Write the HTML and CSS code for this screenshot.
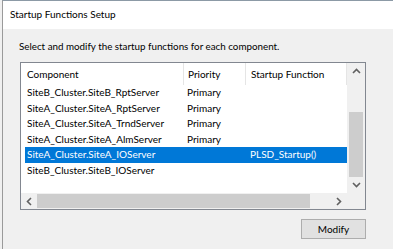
FILE: index.html
```html
<!DOCTYPE html>
<html lang="en">
<head>
    <meta charset="UTF-8">
    <title>Startup Functions Setup</title>
    <link rel="stylesheet" href="styles.css">
</head>
<body>
    <div class="window">
        <div class="titlebar">Startup Functions Setup</div>
        <div class="content">
            <p class="hint">Select and modify the startup functions for each component.</p>
            <div class="listbox">
                <div class="list-main">
                    <div class="list-head">
                        <div class="col col-comp">Component</div>
                        <div class="col col-prio">Priority</div>
                        <div class="col col-func">Startup Function</div>
                    </div>
                    <div class="row">
                        <div class="col col-comp">SiteB_Cluster.SiteB_RptServer</div>
                        <div class="col col-prio">Primary</div>
                        <div class="col col-func"></div>
                    </div>
                    <div class="row">
                        <div class="col col-comp">SiteA_Cluster.SiteA_RptServer</div>
                        <div class="col col-prio">Primary</div>
                        <div class="col col-func"></div>
                    </div>
                    <div class="row">
                        <div class="col col-comp">SiteA_Cluster.SiteA_TrndServer</div>
                        <div class="col col-prio">Primary</div>
                        <div class="col col-func"></div>
                    </div>
                    <div class="row">
                        <div class="col col-comp">SiteA_Cluster.SiteA_AlmServer</div>
                        <div class="col col-prio">Primary</div>
                        <div class="col col-func"></div>
                    </div>
                    <div class="row selected">
                        <div class="col col-comp">SiteA_Cluster.SiteA_IOServer</div>
                        <div class="col col-prio"></div>
                        <div class="col col-func">PLSD_Startup()</div>
                    </div>
                    <div class="row">
                        <div class="col col-comp">SiteB_Cluster.SiteB_IOServer</div>
                        <div class="col col-prio"></div>
                        <div class="col col-func"></div>
                    </div>
                </div>
                <!-- vertical scrollbar -->
                <div class="vscroll">
                    <div class="arrow">
                        <svg width="9" height="6" viewBox="0 0 9 6"><path d="M1 5 L4.5 1.5 L8 5" fill="none" stroke="#606060" stroke-width="1.6"/></svg>
                    </div>
                    <div class="vtrack"><div class="vthumb"></div></div>
                    <div class="arrow">
                        <svg width="9" height="6" viewBox="0 0 9 6"><path d="M1 1 L4.5 4.5 L8 1" fill="none" stroke="#606060" stroke-width="1.6"/></svg>
                    </div>
                </div>
                <!-- horizontal scrollbar -->
                <div class="hscroll">
                    <div class="harrow">
                        <svg width="6" height="9" viewBox="0 0 6 9"><path d="M5 1 L1.5 4.5 L5 8" fill="none" stroke="#606060" stroke-width="1.6"/></svg>
                    </div>
                    <div class="htrack"><div class="hthumb"></div></div>
                    <div class="harrow">
                        <svg width="6" height="9" viewBox="0 0 6 9"><path d="M1 1 L4.5 4.5 L1 8" fill="none" stroke="#606060" stroke-width="1.6"/></svg>
                    </div>
                </div>
                <div class="corner"></div>
            </div>
            <div class="buttons">
                <button type="button" class="btn">Modify</button>
            </div>
        </div>
    </div>
</body>
</html>
```

FILE: styles.css
```css
body {
    margin: 0;
    background: #f0f0f0;
    font-family: Lato, "Noto Sans", sans-serif;
    font-size: 10px;
    color: #000;
}

.window {
    margin-left: 2px;
    height: 248px;
    border-left: 1px solid #9a9a9a;
    border-top: 1px solid #8c9aa6;
    background: #f0f0f0;
}

.titlebar {
    height: 28px;
    background: #fff;
    padding-left: 7px;
    font-size: 10px;
    line-height: 27px;
}

.content {
    padding: 0 0 0 17px;
}

.hint {
    margin: 0 0 0 -1px;
    padding: 9px 0 8px 0;
    height: 16px;
    line-height: 16px;
    font-size: 9.8px;
}

.listbox {
    width: 344px;
    height: 146px;
    border: 1px solid #828790;
    background: #fff;
    display: grid;
    grid-template-columns: 326px 18px;
    grid-template-rows: 130px 16px;
}

.list-main {
    overflow: hidden;
}

.list-head {
    display: flex;
    height: 22px;
    line-height: 22px;
}

.list-head .col {
    border-right: 1px solid #e5e5e5;
}

.col {
    white-space: nowrap;
    overflow: hidden;
}

.col-comp {
    width: 156px;
    padding-left: 6px;
}

.col-prio {
    width: 57px;
    padding-left: 4px;
}

.col-func {
    flex: 1;
    padding-left: 5px;
}

.row {
    display: flex;
    height: 15.6px;
    line-height: 15.6px;
    margin-left: 4px;
}

.row .col-comp {
    width: 156px;
    padding-left: 2px;
}

.row .col-prio {
    width: 58px;
}

.row.selected {
    background: #0078d7;
    color: #fff;
}

.vscroll {
    background: #f0f0f0;
    display: flex;
    flex-direction: column;
}

.arrow {
    height: 17px;
    display: flex;
    align-items: center;
    justify-content: center;
}

.vtrack {
    flex: 1;
    padding: 0 2px;
}

.vthumb {
    margin-top: 32px;
    height: 65px;
    background: #cdcdcd;
}

.hscroll {
    background: #f0f0f0;
    display: flex;
}

.harrow {
    width: 16px;
    display: flex;
    align-items: center;
    justify-content: center;
}

.htrack {
    flex: 1;
    padding: 1px 0;
}

.hthumb {
    width: 273px;
    height: 100%;
    background: #cdcdcd;
}

.corner {
    background: #f0f0f0;
}

.buttons {
    display: flex;
    justify-content: flex-end;
    width: 346px;
    margin-top: 9px;
}

.btn {
    width: 65px;
    height: 20px;
    padding: 0;
    background: #e1e1e1;
    border: 1px solid #adadad;
    font-family: Lato, "Noto Sans", sans-serif;
    font-size: 10px;
    color: #000;
}
```
